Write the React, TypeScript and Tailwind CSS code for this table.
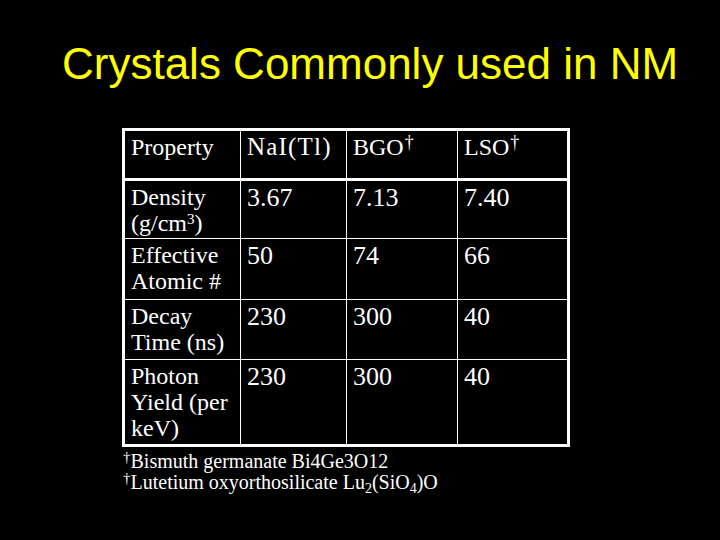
import React from "react";

const serif = "font-['Liberation_Serif','Times_New_Roman',serif]";

function Label({ children }: { children: React.ReactNode }) {
  return (
    <div className="bg-black text-white text-[24px] leading-[26px] pl-[6px] pt-[3px]">
      {children}
    </div>
  );
}

function Num({ children }: { children: React.ReactNode }) {
  return (
    <div className="bg-black text-white text-[26px] leading-[26px] pl-[6px] pt-[4px]">
      {children}
    </div>
  );
}

const Dag = () => (
  <sup className="text-[18px] top-[-0.4em] ml-[1px]">†</sup>
);

export default function App() {
  const cols = "grid grid-cols-[115px_105px_110px_109px]";
  return (
    <div className="w-[720px] h-[540px] bg-black overflow-hidden">
      <div className="mt-[42px] h-[44px] pl-[62px] text-[44px] leading-[44px] text-[#ffff00] font-['Liberation_Sans',Arial,sans-serif] whitespace-nowrap">
        Crystals Commonly used in NM
      </div>
      <div className={`ml-[122px] mt-[42px] w-[448px] border-[3px] border-white bg-white ${serif}`}>
        <div className={`${cols} gap-x-px h-[47px]`}>
          <Label>Property</Label>
          <Label>
            <span className="text-[25px] tracking-[1.2px]">NaI(Tl)</span>
          </Label>
          <Label>
            BGO
            <Dag />
          </Label>
          <Label>
            LSO
            <Dag />
          </Label>
        </div>
        <div className={`${cols} gap-px mt-[3px] grid-rows-[57px_60px_59px_84px]`}>
          <Label>
            Density
            <br />
            (g/cm<sup className="text-[15px] top-[-0.5em]">3</sup>)
          </Label>
          <Num>3.67</Num>
          <Num>7.13</Num>
          <Num>7.40</Num>

          <Label>
            Effective
            <br />
            Atomic #
          </Label>
          <Num>50</Num>
          <Num>74</Num>
          <Num>66</Num>

          <Label>
            Decay
            <br />
            Time (ns)
          </Label>
          <Num>230</Num>
          <Num>300</Num>
          <Num>40</Num>

          <Label>
            Photon
            <br />
            Yield (per
            <br />
            keV)
          </Label>
          <Num>230</Num>
          <Num>300</Num>
          <Num>40</Num>
        </div>
      </div>
      <div className={`mt-[4px] pl-[123px] text-white text-[20px] leading-[21px] whitespace-nowrap ${serif}`}>
        <div>
          <sup className="text-[15px] top-[-0.4em]">†</sup>Bismuth germanate Bi4Ge3O12
        </div>
        <div>
          <sup className="text-[15px] top-[-0.4em]">†</sup>Lutetium oxyorthosilicate Lu
          <sub className="text-[14px]">2</sub>(SiO<sub className="text-[14px]">4</sub>)O
        </div>
      </div>
    </div>
  );
}
